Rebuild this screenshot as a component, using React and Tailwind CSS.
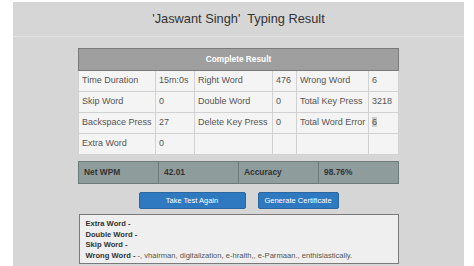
import React from 'react';

const rows = [
    ['Time Duration', '15m:0s', 'Right Word', '476', 'Wrong Word', '6'],
    ['Skip Word', '0', 'Double Word', '0', 'Total Key Press', '3218'],
    ['Backspace Press', '27', 'Delete Key Press', '0', 'Total Word Error', '6'],
    ['Extra Word', '0', '', '', '', ''],
];

const colWidths = ['w-[77px]', 'w-[39px]', 'w-[78px]', 'w-[24px]', 'w-[72px]', 'w-[30px]'];

function ResultTable() {
    return (
        <table className="w-[320px] table-fixed mx-auto border-collapse border border-[#7a7a7a] text-[9px] text-[#555]">
            <colgroup>
                {colWidths.map((w, i) => <col key={i} className={w} />)}
            </colgroup>
            <thead>
            <tr className="h-[22px] bg-[#9f9f9f]">
                <th colSpan={6} className="text-white text-[8.3px] font-bold text-center border border-[#7a7a7a]">Complete Result</th>
            </tr>
            </thead>
            <tbody className="bg-[#f4f4f4]">
            {rows.map((row, i) => (
                <tr key={i} className="h-[21px]">
                    {row.map((cell, j) => (
                        <td key={j} className="px-[3px] border border-[#d2d2d2] whitespace-nowrap overflow-hidden">
                            {i === 2 && j === 5 ? <span className="bg-[#cfcfcf]">{cell}</span> : cell}
                        </td>
                    ))}
                </tr>
            ))}
            </tbody>
        </table>
    );
}

function App() {
    return (
        <div className="w-[474px] h-[266px] bg-white overflow-hidden" style={{ fontFamily: '"Liberation Sans", Arial, sans-serif' }}>
            <div className="ml-[13px] mt-[2px] w-[451px] h-[264px] bg-[#d6d6d6]">
                <div className="h-[35px] flex items-center justify-center border-b border-[#e2e2e2]">
                    <h1 className="text-[12.8px] text-[#333] whitespace-pre">'Jaswant Singh'  Typing Result</h1>
                </div>

                <div className="mt-[11px]">
                    <ResultTable />
                </div>

                <table className="w-[320px] table-fixed mx-auto mt-[6px] border-collapse border border-[#6f7a7a] text-[8.4px] font-bold text-[#333]">
                    <tbody>
                    <tr className="h-[22px] bg-[#8f9c9c]">
                        <td className="w-[80px] px-[5px] border border-[#6f7a7a]">Net WPM</td>
                        <td className="w-[80px] px-[5px] border border-[#6f7a7a]">42.01</td>
                        <td className="w-[80px] px-[5px] border border-[#6f7a7a]">Accuracy</td>
                        <td className="w-[80px] px-[5px] border border-[#6f7a7a]">98.76%</td>
                    </tr>
                    </tbody>
                </table>

                <div className="mt-[8px] flex justify-center gap-[12px]">
                    <button className="w-[107px] h-[17px] rounded-[2px] bg-[#2f79c0] border border-[#2a66a0] text-white text-[7.5px]">Take Test Again</button>
                    <button className="w-[81px] h-[17px] rounded-[2px] bg-[#2f79c0] border border-[#2a66a0] text-white text-[7.5px]">Generate Certificate</button>
                </div>

                <div className="w-[320px] h-[50px] mx-auto mt-[5px] bg-[#efefef] border border-[#7a7a7a] px-[6px] pt-[4px] text-[7.6px] leading-[10.5px] text-[#333]">
                    <div className="font-bold">Extra Word -</div>
                    <div className="font-bold">Double Word -</div>
                    <div className="font-bold">Skip Word -</div>
                    <div className="whitespace-nowrap">
                        <span className="font-bold">Wrong Word - </span>
                        <span className="text-[#555]">-, vhairman, digitalization, e-hralth,, e-Parmaan., enthisiastically.</span>
                    </div>
                </div>
            </div>
        </div>
    );
}

export default App;
